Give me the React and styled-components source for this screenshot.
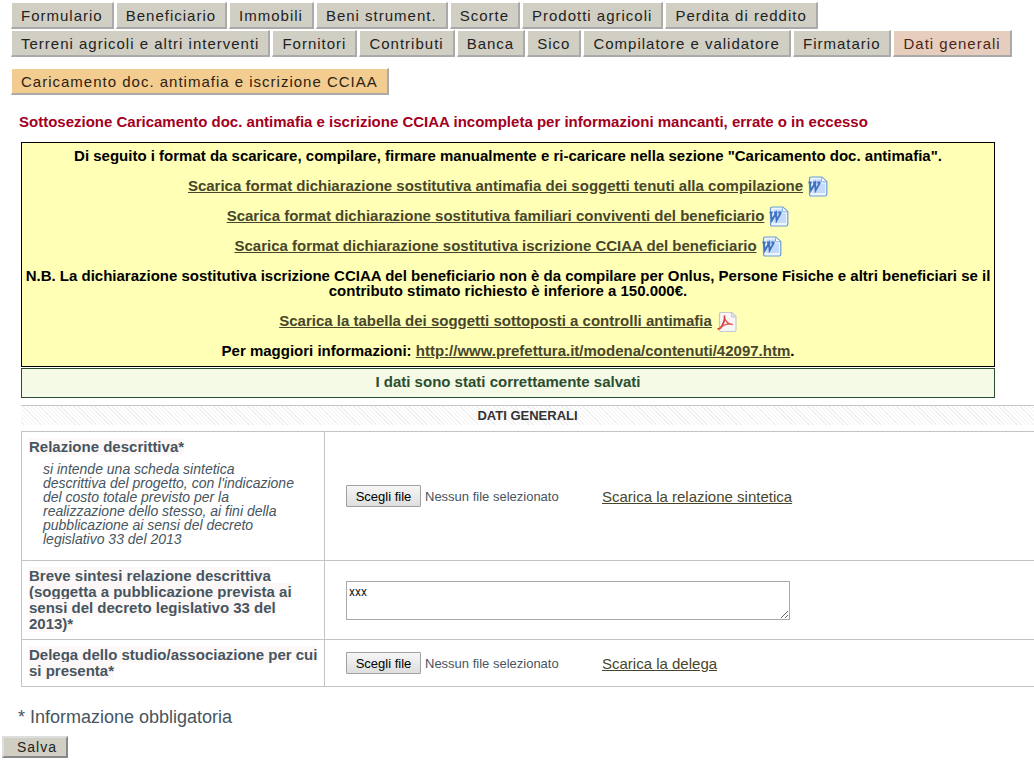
import React, { useRef, useState } from "react";
import styled, { createGlobalStyle } from "styled-components";

const GlobalStyle = createGlobalStyle`
  body {
    margin: 0;
    background: #fff;
    color: #465560;
    font-family: "Liberation Sans", Arial, Helvetica, sans-serif;
    font-size: 15px;
  }
`;

const Page = styled.div`
  padding: 2px 0 4px;
  overflow-x: hidden;
`;

const Tabs = styled.nav`
  display: flex;
  flex-direction: column;
  gap: 1px;
  padding-left: 11px;
`;

const TabRow = styled.div`
  display: flex;
  gap: 2px;
`;

const tabColors = {
  default: { background: "#d1cfc3", color: "#222" },
  active: { background: "#e7cdbe", color: "#4b2615" },
  sub: { background: "#f2cd8f", color: "#2d2213" },
};

const Tab = styled.a`
  box-sizing: border-box;
  height: 27px;
  padding: 0 9px;
  border: 1px solid #fff;
  border-right: 2px solid #aaa;
  border-bottom: 2px solid #aaa;
  background: ${(props) => tabColors[props.$kind || "default"].background};
  color: ${(props) => tabColors[props.$kind || "default"].color};
  font-size: 15px;
  line-height: 26px;
  letter-spacing: 1px;
  text-decoration: none;
  white-space: nowrap;
`;

const SubTabs = styled.nav`
  display: flex;
  padding: 11px 0 0 11px;
`;

const ErrorText = styled.p`
  margin: 19px 0 12px 19px;
  color: #a2001d;
  font-size: 15px;
  font-weight: bold;
  line-height: 16px;
`;

const Notice = styled.div`
  margin: 0 39px 1px 21px;
  padding: 5px 2px 8px;
  border: 1px solid #000;
  background: #ffffb5;
  color: #000;
  font-size: 15px;
  font-weight: bold;
  line-height: 15px;
  text-align: center;

  p {
    margin: 0 0 15px;
  }

  p:last-child {
    margin-bottom: 0;
  }
`;

const Link = styled.a`
  color: #47462b;
`;

const DocLine = styled.p`
  display: flex;
  justify-content: center;
  gap: 5px;

  svg {
    flex: none;
    margin: -2px 0 -4px;
  }
`;

const Saved = styled.div`
  margin: 0 39px 7px 21px;
  padding: 5px 8px 7px;
  border: 1px solid #2c4d30;
  background: #f4fae6;
  color: #2c4d30;
  font-size: 15px;
  font-weight: bold;
  line-height: 16px;
  text-align: center;
`;

const SectionTitle = styled.h2`
  margin: 0 0 6px 21px;
  border-top: 1px solid #c8c8c8;
  background: repeating-linear-gradient(45deg, #fff 0 2px, #f0f0f0 2px 3px);
  color: #333;
  font-size: 13px;
  font-weight: bold;
  line-height: 19px;
  text-align: center;
`;

const TableWrap = styled.div`
  padding-left: 21px;
`;

const FormTable = styled.table`
  width: 100%;
  border-collapse: collapse;
`;

const HeadCell = styled.th`
  box-sizing: border-box;
  width: 303px;
  padding: 7px 5px 7px 7px;
  border: 1px solid #c4c4c4;
  font-size: 15px;
  line-height: 16px;
  text-align: left;
  vertical-align: top;
`;

const Label = styled.label`
  background: #fdf8f8;
`;

const Hint = styled.p`
  margin: 7px 0;
  padding: 0 20px 0 14px;
  font-size: 14px;
  font-style: italic;
  font-weight: normal;
  line-height: 14px;
`;

const FieldCell = styled.td`
  padding: 0 21px;
  border: 1px solid #c4c4c4;
  border-right: 0;
  vertical-align: middle;
`;

const FieldRow = styled.div`
  display: flex;
  align-items: center;
`;

const FilePicker = styled.div`
  display: flex;
  align-items: center;
  gap: 4px;
  width: 256px;
  font-size: 13px;
`;

const FileButton = styled.button`
  min-width: 75px;
  height: 22px;
  padding: 0 8px;
  border: 1px solid #a0a0a0;
  border-radius: 1px;
  background: linear-gradient(#f6f6f6, #dedede);
  color: #000;
  font-family: inherit;
  font-size: 13px;
`;

const TextArea = styled.textarea`
  display: block;
  box-sizing: border-box;
  width: 444px;
  height: 39px;
  padding: 2px;
  border: 1px solid #a9a9a9;
  color: #222;
  font-family: Roboto, "Open Sans", sans-serif;
  font-size: 12px;
  line-height: 16px;
`;

const Required = styled.p`
  margin: 20px 0 9px 18px;
  font-size: 18px;
  line-height: 20px;
`;

const SaveButton = styled.button`
  margin-left: 2px;
  height: 22px;
  padding: 0 9px 0 13px;
  border: 2px solid;
  border-color: #ddd #888 #888 #ddd;
  background: #d1cfc3;
  color: #222;
  font-family: inherit;
  font-size: 14px;
  line-height: 16px;
  letter-spacing: 1px;
`;

const WordIcon = () => (
  <svg width="20" height="21" viewBox="0 0 20 21" aria-hidden="true">
    <path
      d="M3.5 1h10.300l5 4.500v12.700q0 1.800-1.800 1.800H3.300q-1.800 0-1.800-1.800V2.800Q1.500 1 3.500 1z"
      fill="#eef5ff"
      stroke="#6a9bd6"
      strokeWidth="1.200"
    />
    <path d="M4.500 3.500h8.500v4h4V17H4.500z" fill="#c4dafb" />
    <path d="M13.500 1.500v4.300h4.800" fill="#fff" stroke="#86b0e4" />
    <path
      d="M0.500 6.500h3.300M5 6.500h3.300M9.300 6.500h3.200M2 7l.9 7.500L7 7l.6 7.500L11.700 7"
      fill="none"
      stroke="#3f73c0"
      strokeWidth="1.800"
    />
  </svg>
);

const PdfIcon = () => (
  <svg width="20" height="21" viewBox="0 0 20 21" aria-hidden="true">
    <path
      d="M4 1.500h11l4 4V19q0 1.500-1.500 1.500H4Q2.500 20.500 2.500 19V3q0-1.500 1.500-1.500z"
      fill="#f7f7f8"
      stroke="#c8c8cc"
      strokeWidth="1.200"
    />
    <path d="M14.500 1.800v4.200h4.200" fill="#e4e4e8" stroke="#c8c8cc" />
    <path
      d="M.5 18.300l3-1.200C6 13.800 8 9.500 7.500 4.500"
      fill="none"
      stroke="#d93a33"
      strokeWidth="1.700"
    />
    <path
      d="M3.500 16.500C7 13.700 11.500 12.300 15.800 13.300M7.800 7.500C8.700 10.300 11 13 15.500 13.600"
      fill="none"
      stroke="#e2544c"
      strokeWidth="1.300"
    />
  </svg>
);

const mainTabs = [
  ["Formulario", "Beneficiario", "Immobili", "Beni strument.", "Scorte", "Prodotti agricoli", "Perdita di reddito"],
  [
    "Terreni agricoli e altri interventi",
    "Fornitori",
    "Contributi",
    "Banca",
    "Sico",
    "Compilatore e validatore",
    "Firmatario",
    "Dati generali",
  ],
];

const wordDocs = [
  "Scarica format dichiarazione sostitutiva antimafia dei soggetti tenuti alla compilazione",
  "Scarica format dichiarazione sostitutiva familiari conviventi del beneficiario",
  "Scarica format dichiarazione sostitutiva iscrizione CCIAA del beneficiario",
];

const FileField = ({ id }) => {
  const input = useRef(null);
  const [name, setName] = useState("Nessun file selezionato");

  return (
    <FilePicker>
      <input
        ref={input}
        type="file"
        hidden
        onChange={(e) => e.target.files[0] && setName(e.target.files[0].name)}
      />
      <FileButton id={id} type="button" onClick={() => input.current.click()}>
        Scegli file
      </FileButton>
      <span>{name}</span>
    </FilePicker>
  );
};

const App = () => {
  return (
    <Page>
      <GlobalStyle />
      <Tabs>
        {mainTabs.map((row, i) => (
          <TabRow key={i}>
            {row.map((tab) => (
              <Tab key={tab} href="#" $kind={tab === "Dati generali" ? "active" : "default"}>
                {tab}
              </Tab>
            ))}
          </TabRow>
        ))}
      </Tabs>
      <SubTabs>
        <Tab href="#" $kind="sub">
          Caricamento doc. antimafia e iscrizione CCIAA
        </Tab>
      </SubTabs>

      <ErrorText>
        Sottosezione Caricamento doc. antimafia e iscrizione CCIAA incompleta per informazioni mancanti, errate o in
        eccesso
      </ErrorText>

      <Notice>
        <p>
          Di seguito i format da scaricare, compilare, firmare manualmente e ri-caricare nella sezione "Caricamento doc.
          antimafia".
        </p>
        {wordDocs.map((doc) => (
          <DocLine key={doc}>
            <Link href="#">{doc}</Link>
            <WordIcon />
          </DocLine>
        ))}
        <p>
          N.B. La dichiarazione sostitutiva iscrizione CCIAA del beneficiario non è da compilare per Onlus, Persone
          Fisiche e altri beneficiari se il contributo stimato richiesto è inferiore a 150.000€.
        </p>
        <DocLine>
          <Link href="#">Scarica la tabella dei soggetti sottoposti a controlli antimafia</Link>
          <PdfIcon />
        </DocLine>
        <p>
          Per maggiori informazioni: <Link href="#">http://www.prefettura.it/modena/contenuti/42097.htm</Link>.
        </p>
      </Notice>
      <Saved>I dati sono stati correttamente salvati</Saved>

      <form onSubmit={(e) => e.preventDefault()}>
        <SectionTitle>DATI GENERALI</SectionTitle>
        <TableWrap>
          <FormTable>
            <tbody>
              <tr>
                <HeadCell scope="row">
                  <Label htmlFor="relazione">Relazione descrittiva*</Label>
                  <Hint>
                    si intende una scheda sintetica descrittiva del progetto, con l'indicazione del costo totale
                    previsto per la realizzazione dello stesso, ai fini della pubblicazione ai sensi del decreto
                    legislativo 33 del 2013
                  </Hint>
                </HeadCell>
                <FieldCell>
                  <FieldRow>
                    <FileField id="relazione" />
                    <Link href="#">Scarica la relazione sintetica</Link>
                  </FieldRow>
                </FieldCell>
              </tr>
              <tr>
                <HeadCell scope="row">
                  <Label htmlFor="sintesi">
                    Breve sintesi relazione descrittiva (soggetta a pubblicazione prevista ai sensi del decreto
                    legislativo 33 del 2013)*
                  </Label>
                </HeadCell>
                <FieldCell>
                  <TextArea id="sintesi" defaultValue="xxx" />
                </FieldCell>
              </tr>
              <tr>
                <HeadCell scope="row">
                  <Label htmlFor="delega">Delega dello studio/associazione per cui si presenta*</Label>
                </HeadCell>
                <FieldCell>
                  <FieldRow>
                    <FileField id="delega" />
                    <Link href="#">Scarica la delega</Link>
                  </FieldRow>
                </FieldCell>
              </tr>
            </tbody>
          </FormTable>
        </TableWrap>
        <Required>* Informazione obbligatoria</Required>
        <SaveButton type="submit">Salva</SaveButton>
      </form>
    </Page>
  );
};

export default App;
